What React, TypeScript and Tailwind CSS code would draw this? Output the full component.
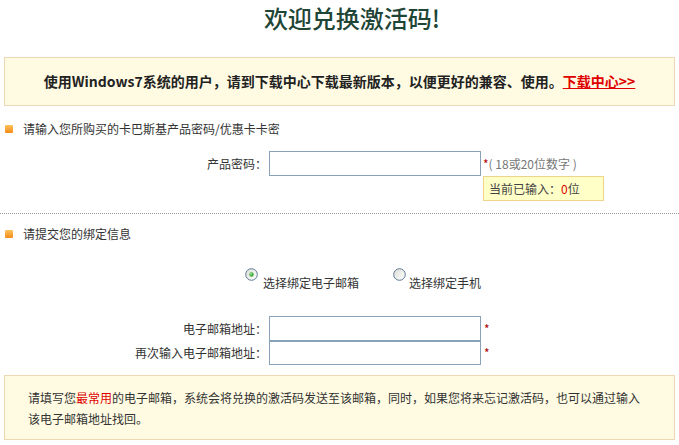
import React from "react";

function Bullet() {
  return (
    <span className="inline-block w-[8px] h-[8px] rounded-[1px] bg-gradient-to-b from-[#ffc35a] to-[#f28a0c] mr-[10px] ml-[5px]" />
  );
}

function Radio({ checked }: { checked?: boolean }) {
  return (
    <svg width="13" height="13" viewBox="0 0 13 13" className="shrink-0">
      <defs>
        <linearGradient id={checked ? "rg1" : "rg2"} x1="0" y1="0" x2="1" y2="1">
          <stop offset="0" stopColor="#dcdcd5" />
          <stop offset="1" stopColor="#ffffff" />
        </linearGradient>
      </defs>
      <circle cx="6.5" cy="6.5" r="5.8" fill={`url(#${checked ? "rg1" : "rg2"})`} stroke="#5d7a95" strokeWidth="1" />
      {checked && <circle cx="6.5" cy="6.5" r="2.2" fill="#3fae3f" />}
      {checked && <circle cx="6" cy="6" r="0.9" fill="#a6e5a6" />}
    </svg>
  );
}

function FieldRow({
  label,
  height,
  children,
}: {
  label: string;
  height: string;
  children?: React.ReactNode;
}) {
  return (
    <div className="flex items-center">
      <div className="w-[269px] pr-[2px] text-right">{label}</div>
      <input className={`w-[212px] ${height} border border-[#8aa2b8] bg-white outline-none`} />
      {children}
    </div>
  );
}

export default function App() {
  return (
    <div className="w-[679px] h-[445px] overflow-hidden bg-white text-[12px] text-[#333] font-['Noto_Sans_CJK_SC',sans-serif]">
      <h1 className="h-[57px] pl-[25px] text-center text-[24px] font-medium leading-[36px] text-[#1e4536]">
        欢迎兑换激活码!
      </h1>

      <div className="mx-[4px] h-[49px] border border-[#ecd8b4] bg-[#fffbe2] flex items-center justify-center font-bold text-[14px] text-[#222]">
        <span>使用Windows7系统的用户，请到下载中心下载最新版本，以便更好的兼容、使用。</span>
        <a href="#" className="text-[#e00000] underline">
          下载中心&gt;&gt;
        </a>
      </div>

      <div className="mt-[13px] h-[20px] flex items-center">
        <Bullet />
        <span>请输入您所购买的卡巴斯基产品密码/优惠卡卡密</span>
      </div>

      <div className="mt-[12px]">
        <FieldRow label="产品密码：" height="h-[25px]">
          <span className="ml-[2px] text-[#b00000]">*</span>
          <span className="text-[#777]">(&nbsp;18或20位数字&nbsp;)</span>
        </FieldRow>
        <div className="ml-[483px] w-[121px] h-[25px] border border-[#eed48a] bg-[#ffffc8] flex items-center pl-[5px] text-[#444]">
          当前已输入：<span className="text-[#e00000]">0</span>位
        </div>
      </div>

      <div className="mt-[12px] border-t border-dotted border-[#999]" />

      <div className="mt-[10px] h-[20px] flex items-center">
        <Bullet />
        <span>请提交您的绑定信息</span>
      </div>

      <div className="mt-[24px] h-[24px] flex items-start">
        <div className="ml-[245px] flex items-start">
          <Radio checked />
          <span className="ml-[5px] mt-[6px]">选择绑定电子邮箱</span>
        </div>
        <div className="ml-[34px] flex items-start">
          <Radio />
          <span className="ml-[3px] mt-[6px]">选择绑定手机</span>
        </div>
      </div>

      <div className="mt-[24px]">
        <FieldRow label="电子邮箱地址：" height="h-[25px]">
          <span className="ml-[3px] text-[#b00000]">*</span>
        </FieldRow>
        <FieldRow label="再次输入电子邮箱地址：" height="h-[24px]">
          <span className="ml-[3px] text-[#b00000]">*</span>
        </FieldRow>
      </div>

      <div className="mt-[10px] mx-[4px] h-[65px] border border-[#ecd8b4] bg-[#fffbe2] pl-[23px] pr-[10px] pt-[11px] leading-[21px]">
        请填写您<span className="text-[#e00000]">最常用</span>
        的电子邮箱，系统会将兑换的激活码发送至该邮箱，同时，如果您将来忘记激活码，也可以通过输入
        <br />
        该电子邮箱地址找回。
      </div>
    </div>
  );
}
